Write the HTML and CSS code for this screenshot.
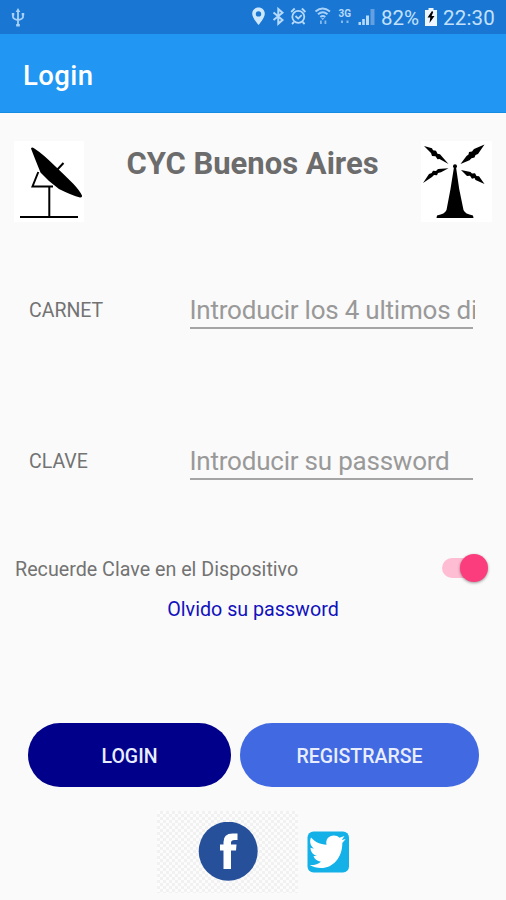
FILE: index.html
```html
<!DOCTYPE html>
<html lang="es">
<head>
<meta charset="utf-8">
<title>Login</title>
<link rel="stylesheet" href="styles.css">
</head>
<body>
<div class="status">
  <svg class="usb" viewBox="10 6 16 22" width="16" height="22" fill="none" stroke="#a9d2fa" stroke-width="1.800"><path d="M18 11v14M13 14v3q0 2 5 3M23 14v3q0 2-5 3"/><path d="M18 8l-2.300 4h4.600zM16.200 24h3.600v2.500h-3.600z" fill="#a9d2fa" stroke="none"/><path d="M11.800 13h2.500v2.500h-2.500zM21.700 13h2.500v2.500h-2.500z" fill="#a9d2fa" stroke="none"/></svg>
  <svg class="icons" viewBox="250 6 128 24" width="128" height="24">
    <path fill="#cde7ff" fill-rule="evenodd" d="M258.500 8.500c-3.700 0-6.300 2.700-6.300 6.200 0 4.300 6.300 11.300 6.300 11.300s6.300-7 6.300-11.300c0-3.500-2.600-6.200-6.300-6.200zm0 3.700a2.700 2.700 0 1 1 0 5.400 2.700 2.700 0 0 1 0-5.400z"/>
    <path fill="none" stroke="#b5dafc" stroke-width="2" d="M273.500 13.500l9 7.500-4.200 3.700V10l4.200 3.700-9 7.300"/>
    <g fill="none" stroke="#b5dafc" stroke-width="1.800"><circle cx="298.300" cy="17.800" r="6"/><path d="M295.500 17l2.700 2.600 3.500-3.500M291.200 13l3.500-3.500M305.400 13l-3.500-3.500M294 23l-2 2M302.600 23l2 2"/></g>
    <g fill="none" stroke="#a9d2fa" stroke-width="1.900"><path d="M315.500 12.500q7-6 14.500 0M318 15.300q4.800-4 9.500 0M320.300 18q2.500-2 5 0"/></g>
    <path fill="#a9d2fa" d="M321 19h3.500l-1.800 2.300zM320 21.500h1.800V25H320zM324.500 21.500h1.800V25h-1.800zM341 21.500h2v2.500h-2zM346.500 21.500h2v2.500h-2z" opacity=".75"/>
    <path fill="#b5dafc" d="M358.500 23h2.500v3h-2.500zM362.200 20h2.600v6h-2.600zM366 16.500h3v9.500h-3z"/>
    <path fill="#639fe1" d="M370.500 10h4v16h-4z"/>
    <text class="net" x="338.500" y="18">3G</text>
  </svg>
  <span class="pct">82%</span>
  <svg class="battery" viewBox="0 0 12 18" width="12" height="18"><path fill="#eef7ff" d="M3.500 0h5v2H12v16H0V2h3.500z"/><path d="M7 3L2.500 9.500h2.800L4.500 15l5-7H6.600l1.600-4z"/></svg>
  <span class="time">22:30</span>
</div>
<header class="bar"><h1>Login</h1></header>
<main>
  <section class="brand">
    <svg viewBox="14 141 70 81" width="70" height="81">
      <path fill="#fff" d="M14 141h70v81H14z"/>
      <path d="M31 148.500q.8-2 3-.3Q43 154 55 166q11 10.500 18.500 18 6.500 7 8.500 11.500.5 2.300-2 2-8-2-21-8.500-10-7-18.500-16.500Q35 159 31 148.500z"/>
      <path fill="none" stroke="#000" stroke-width="2" d="M56 171l7.500-8M38.300 172l-5.800 14.500H53M49.300 187v29M20 217h58"/>
    </svg>
    <h2>CYC Buenos Aires</h2>
    <svg viewBox="421 141 71 81" width="71" height="81">
      <path fill="#fff" d="M421 141h71v81h-71z"/>
      <path d="M424 146l8 2.200 1 2 3 .5 1.500 3 2.500.5L448.500 164l-9-5-2 .2-2-3-3.500-.3-1-3zM484.500 144.500L478 154l-2.500 1-1 2.500-3 .7-2 2L460.500 164l6-8 2-1.500.5-2.500 3-.5 2-2.500zM423 183l6-9 2.700-1 1.300-2.300 3 .3 2-2 10.500-.7-7.500 4-3 .7-1 2.200-3-.2-2 2zM461 170l9.500 2 1.500 1.500 3-.3 1.500 2.800 2.500.2 5.500 7.800-9-4-1-2-2.500.7-2-3-3 .2z"/>
      <circle cx="455" cy="166.300" r="2"/><path d="M454 167h2l3.200 22 4.300 21q1.500 4 9.500 5.500l.5 2.500H436.500l.5-2.500q8-1.500 9.500-5.500l4-21z"/>
    </svg>
  </section>
  <label class="field"><span>CARNET</span><span class="input"><span class="hint">Introducir los 4 ultimos digitos</span></span></label>
  <label class="field second"><span>CLAVE</span><span class="input"><span class="hint">Introducir su password</span></span></label>
  <div class="remember"><span>Recuerde Clave en el Dispositivo</span><span class="switch"><i></i></span></div>
  <a class="forgot">Olvido su password</a>
  <div class="actions"><button class="login">LOGIN</button><button class="register">REGISTRARSE</button></div>
  <div class="social">
    <div class="fb"><svg viewBox="198 822 60 60" width="60" height="60"><circle cx="228.200" cy="851.200" r="29.500" fill="#27509b"/><path fill="#fff" d="M223.500 869v-18.500H220V844.500h3.500v-2.500q0-8.500 9-8.500h5v6.500h-3q-3.500 0-3.500 2.800v1.700h5.500l-.5 6H231V869z"/></svg></div>
    <svg class="tw" viewBox="307 831 42 42" width="42" height="42"><rect x="307.500" y="831.500" width="41.500" height="41" rx="6" fill="#13b1e7"/><path fill="#fff" d="M311 837.500c4 4.500 9 6.800 15.500 7.300-1.200-5.800 2.500-9.300 7.300-9.300 2.400 0 4.200.8 5.700 2.200l5-1.700-2.800 4 4-.9-3.400 3.800c.3 14-9 25.100-21.300 25.100-4.200 0-8-1-11.300-3 4.500.3 8.300-.8 11.300-3.300-4-.3-6.500-2.500-7.500-5.600l3.500-.1c-4-1.200-6.500-4.200-6.500-8.300l3.500 1c-3.700-2.900-4.800-7.200-3-11.200z"/></svg>
  </div>
</main>
</body>
</html>
```
FILE: styles.css
```css
* { box-sizing: border-box; }
body { margin: 0; width: 506px; height: 900px; overflow: hidden; background: #fafafa; font-family: Roboto, sans-serif; color: #737373; }
svg { display: block; flex: none; }
.status { display: flex; align-items: center; height: 34px; padding: 0 10px; background: #1976d2; color: #c3e1fd; font-size: 20.5px; line-height: 34px; white-space: nowrap; }
.icons { margin-left: 224px; }
.net { font: 700 10px Roboto, sans-serif; fill: #b5dafc; }
.pct { width: 43px; margin-left: 3px; padding-top: 2px; }
.battery { margin-left: 1px; }
.time { margin-left: 6px; padding-top: 2px; letter-spacing: .2px; }
.bar { height: 79px; padding-left: 23px; background: #2196f3; border-bottom: 1px solid #168be2; }
.bar h1 { margin: 0; color: #fff; font-size: 27.5px; font-weight: 500; line-height: 83px; letter-spacing: .4px; }
.brand { display: flex; justify-content: space-between; height: 109px; padding: 28px 14px 0; }
.brand h2 { margin: 4px 0 0; font-size: 31px; line-height: 38px; font-weight: 700; color: #6c6c6c; white-space: nowrap; }
.field { display: flex; align-items: center; height: 42px; margin: 65px 33px 0 29px; font-size: 19.5px; line-height: 24px; }
.field > span:first-child { width: 160.5px; padding-top: 5px; }
.field.second { margin-top: 109px; }
.input { width: 283.5px; height: 42px; border-bottom: 2px solid #a5a5a5; }
.hint { display: block; width: 285px; overflow: hidden; white-space: nowrap; font-size: 26px; line-height: 46px; letter-spacing: -.22px; color: #999; }
.field.second .hint { line-height: 47px; }
.remember { display: flex; justify-content: space-between; align-items: center; height: 34px; margin: 71px 18px 0 15px; font-size: 19.7px; }
.remember > span:first-child { padding-top: 2px; }
.switch { display: flex; justify-content: flex-end; align-items: center; width: 46px; height: 20px; border-radius: 10px; background: linear-gradient(#ffbdd4, #ffbdd4) left / 36px 100% no-repeat; }
.switch i { flex: none; width: 28px; height: 28px; border-radius: 50%; background: #fb3d7e; box-shadow: 0 1px 3px #0006; }
.forgot { display: block; margin-top: 12px; text-align: center; font-size: 19.7px; line-height: 26px; color: #1111bd; }
.actions { display: flex; gap: 9px; margin: 100px 27px 0 28px; }
.actions button { height: 64px; padding: 2px 0 0; border: 0; border-radius: 32px; color: #e9eeff; font: 500 19.5px/64px Roboto, sans-serif; }
.login { width: 203px; background: #00008b; }
.register { width: 239px; background: #4169e1; }
.social { display: flex; align-items: center; gap: 9px; margin: 24px 0 0 157px; }
.fb { display: flex; justify-content: center; align-items: center; width: 141px; height: 82px; background: repeating-conic-gradient(#f1f1f1 0 25%, #fcfcfc 0 50%) 0 0 / 6px 6px; }
```
